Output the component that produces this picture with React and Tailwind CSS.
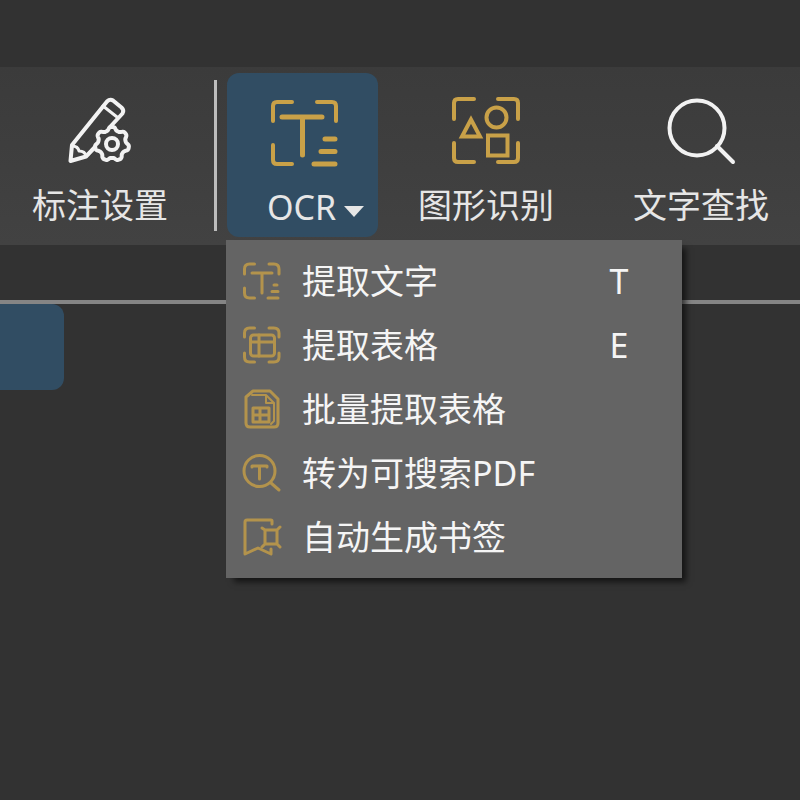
// Gear outline with rounded teeth around the given centre
const gearPath = (cx, cy, r, depth, teeth) => {
  const points = [];
  for (let i = 0; i < 140; i++) {
    const a = (i / 140) * Math.PI * 2;
    const wave = Math.tanh(1.5 * Math.cos(teeth * (a + Math.PI / 2)));
    const radius = r + depth * wave;
    points.push(`${(cx + radius * Math.cos(a)).toFixed(1)} ${(cy + radius * Math.sin(a)).toFixed(1)}`);
  }
  return `M${points.join('L')}Z`;
};

function ToolIcon({ children, className = 'text-[#c9a148]' }) {
  return (
    <svg
      className={`h-[72px] w-[72px] ${className}`}
      viewBox="0 0 72 72"
      fill="none"
      stroke="currentColor"
      strokeWidth={4}
      strokeLinecap="round"
      strokeLinejoin="round"
      aria-hidden="true"
    >
      {children}
    </svg>
  );
}

function MenuIcon({ children }) {
  return (
    <svg
      className="h-10 w-10 text-[#b3934c]"
      viewBox="0 0 40 40"
      fill="none"
      stroke="currentColor"
      strokeWidth={3}
      strokeLinecap="round"
      strokeLinejoin="round"
      aria-hidden="true"
    >
      {children}
    </svg>
  );
}

const AnnotateIcon = () => (
  <ToolIcon className="text-[#f2f2f2]">
    <path d="M31 52L22 61.5L6.5 66L8 50L43 6.5q3-3 6-1l8.500 7q3 3 1 6L46 32" />
    <path d="M39 11L53 22M8 51q6 0 7 5q6 0 7 5" strokeWidth={3} />
    <path d={gearPath(48, 49, 15.5, 1.8, 7)} />
    <circle cx="48" cy="49" r="6" />
  </ToolIcon>
);

const OcrIcon = () => (
  <ToolIcon>
    <path d="M5 24V9q0-4 4-4h15M49 5h15q4 0 4 4v15M5 48v15q0 4 4 4h15" />
    <path d="M14 20h40M34.5 20v38" strokeWidth={5} />
    <path d="M57 42h10M53 54.5h14M46 67h21" strokeWidth={5} />
  </ToolIcon>
);

const ShapesIcon = () => (
  <ToolIcon>
    <path d="M4 24V8q0-4 4-4h16M48 4h16q4 0 4 4v16M4 48v15q0 4 4 4h16M48 67h16q4 0 4-4V48" />
    <circle cx="46.5" cy="22.5" r="10" />
    <path d="M21 24.5L12 41.5h18z" strokeLinejoin="miter" />
    <path d="M38 40.5h19.5v20H38z" strokeLinejoin="miter" />
  </ToolIcon>
);

const SearchIcon = () => (
  <ToolIcon className="text-[#f2f2f2]">
    <circle cx="32" cy="33" r="27.5" />
    <path d="M52 51L68 67" />
  </ToolIcon>
);

const tools = [
  { label: '图形识别', icon: ShapesIcon, width: 'w-[216px]' },
  { label: '文字查找', icon: SearchIcon, width: 'w-[214px]' },
];

const menuItems = [
  {
    label: '提取文字',
    shortcut: 'T',
    icon: (
      <>
        <path d="M2.5 13V8q0-5 5-5h5M27 3h5q5 0 5 5v5M2.5 27v5q0 5 5 5h5" />
        <path d="M10 12h20M20 12v20M32 24h3M30 30.5h6M26 37h10" />
      </>
    ),
  },
  {
    label: '提取表格',
    shortcut: 'E',
    icon: (
      <>
        <path d="M2.5 12V8q0-5 5-5h5M27 3h5q5 0 5 5v4M2.5 28v4q0 5 5 5h5M27 37h5q5 0 5-5v-4" />
        <rect x="8.5" y="10" width="24" height="21" rx="3" />
        <path d="M9 17h23M17 10v21" />
      </>
    ),
  },
  {
    label: '批量提取表格',
    icon: (
      <>
        <path d="M11 2h17l8 8v24q0 4-4 4H8q-4 0-4-4V8z" />
        <path d="M10 6h14v8h8v18l-3 3M24 6l8 8" strokeWidth={2} />
        <path d="M11 19h16v14H11zM11 26h16M18 19v14" />
      </>
    ),
  },
  {
    label: '转为可搜索PDF',
    icon: (
      <>
        <circle cx="17.5" cy="18" r="15.5" />
        <path d="M10 13h15v1M10 13v1M17.5 13v13" />
        <path d="M29 30L37 37" />
      </>
    ),
  },
  {
    label: '自动生成书签',
    icon: (
      <>
        <path d="M30 7V4q0-1-1-1H5q-2 0-2 2v32l13-6l13 6v-5" />
        <path d="M23 13h12v14H23zM20 11l3 2M38 10l-3 3M20 30l3-3M38 30l-3-3" />
      </>
    ),
  },
];

function OcrMenu() {
  return (
    <div
      role="menu"
      className="absolute top-[167px] -left-px z-10 w-[456px] bg-[#646464] py-[9px] shadow-[6px_6px_6px_-2px_rgba(0,0,0,0.6)]"
    >
      {menuItems.map((item) => (
        <button
          key={item.label}
          type="button"
          role="menuitem"
          className="flex h-16 w-full items-center pr-[52px] pl-4 text-[#f5f5f5]"
        >
          <MenuIcon>{item.icon}</MenuIcon>
          <span className="ml-5 whitespace-nowrap">{item.label}</span>
          {item.shortcut && <span className="ml-auto w-[22px] text-center">{item.shortcut}</span>}
        </button>
      ))}
    </div>
  );
}

function Toolbar() {
  return (
    <div className="flex h-[178px] items-start bg-linear-to-b from-[#3b3b3b] to-[#424242] pt-[6px]">
      <button type="button" className="flex w-[200px] shrink-0 flex-col items-center pt-[22px]">
        <AnnotateIcon />
        <span className="mt-[18px] leading-10">标注设置</span>
      </button>
      <div className="mt-[7px] mr-[10px] ml-[14px] h-[151px] w-[3px] shrink-0 bg-[#bdbdbd]" />
      <div className="relative w-[151px] shrink-0">
        <button
          type="button"
          aria-haspopup="menu"
          aria-expanded="true"
          className="flex h-[164px] w-full flex-col items-center rounded-xl bg-[#314d63] pt-6 pl-0.5"
        >
          <OcrIcon />
          <span className="mt-[18px] flex items-center pl-6 leading-10">
            OCR
            <svg className="mt-2 ml-2 h-[11px] w-5" viewBox="0 0 20 11" fill="currentColor" aria-hidden="true">
              <path d="M0 0h20L10 11z" />
            </svg>
          </span>
        </button>
        <OcrMenu />
      </div>
      {tools.map((tool) => {
        const Icon = tool.icon;
        return (
          <button
            key={tool.label}
            type="button"
            className={`flex shrink-0 flex-col items-center pt-[22px] ${tool.width}`}
          >
            <Icon />
            <span className="mt-[18px] leading-10">{tool.label}</span>
          </button>
        );
      })}
    </div>
  );
}

function App() {
  return (
    <div className="min-h-screen overflow-hidden bg-[#323232] pt-[67px] font-['Noto_Sans','Noto_Sans_CJK_SC',sans-serif] text-[34px] text-[#e6e6e6]">
      <Toolbar />
      <div className="mt-[55px] border-t-4 border-[#858585]">
        <div className="h-[86px] w-16 rounded-r-xl bg-[#314d63]" />
      </div>
    </div>
  );
}

export default App;
